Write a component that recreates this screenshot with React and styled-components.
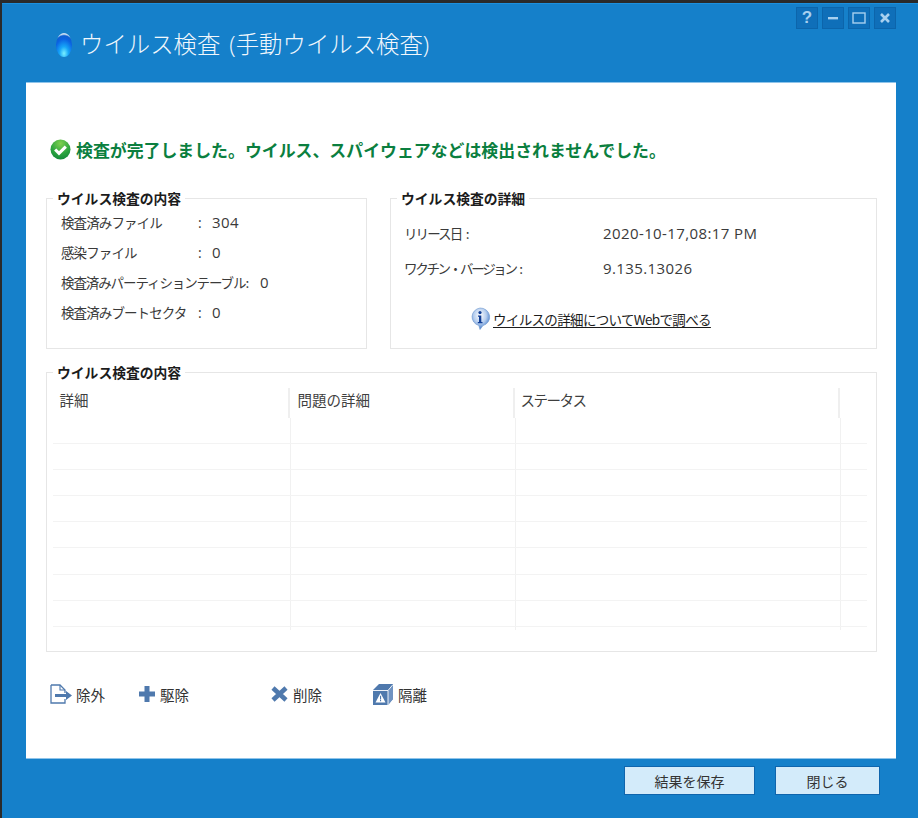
import styled, { createGlobalStyle } from "styled-components";

const GlobalStyle = createGlobalStyle`
  html, body {
    margin: 0;
    background: #2a2a2a;
  }
  * {
    box-sizing: border-box;
  }
`;

const jp = `"Noto Sans CJK JP", "Open Sans", sans-serif`;
const latin = `"Open Sans", "Noto Sans CJK JP", sans-serif`;

const rows = [0, 1, 2, 3, 4, 5, 6, 7];

const App = () => {
  return (
    <>
      <GlobalStyle />
      <Window>
        <Header>
          <TitleWrap>
            <svg width="18" height="26" viewBox="0 0 18 26">
              <defs>
                <radialGradient id="drop" cx="0.5" cy="0.85" r="0.8">
                  <stop offset="0" stopColor="#7af0ff" />
                  <stop offset="0.35" stopColor="#16a6f8" />
                  <stop offset="0.75" stopColor="#0a62e2" />
                  <stop offset="0.92" stopColor="#0d5fd2" />
                  <stop offset="1" stopColor="#c4dbf1" />
                </radialGradient>
              </defs>
              <ellipse cx="9" cy="13" rx="8" ry="12" fill="url(#drop)" />
            </svg>
            <Title>
              ウイルス検査<Gap />
              <span>(</span>手動ウイルス検査<span>)</span>
            </Title>
          </TitleWrap>
          <WinButtons>
            <WinButton>
              <b>?</b>
            </WinButton>
            <WinButton>
              <svg width="12" height="12" viewBox="0 0 12 12">
                <rect x="1" y="5" width="10" height="2.4" fill="#a8d0ef" />
              </svg>
            </WinButton>
            <WinButton>
              <svg width="14" height="12" viewBox="0 0 14 12">
                <rect x="1" y="1" width="12" height="10" fill="none" stroke="#a8d0ef" strokeWidth="1.4" />
              </svg>
            </WinButton>
            <WinButton>
              <svg width="12" height="12" viewBox="0 0 12 12">
                <path d="M2 2l8 8M10 2l-8 8" stroke="#a8d0ef" strokeWidth="2.6" />
              </svg>
            </WinButton>
          </WinButtons>
        </Header>

        <Panel>
          <Status>
            <svg width="21" height="21" viewBox="0 0 21 21">
              <defs>
                <radialGradient id="ok" cx="0.5" cy="0.2" r="0.9">
                  <stop offset="0" stopColor="#7fd04e" />
                  <stop offset="0.55" stopColor="#2ca53f" />
                  <stop offset="1" stopColor="#0c8238" />
                </radialGradient>
              </defs>
              <circle cx="10.5" cy="10.5" r="10" fill="url(#ok)" />
              <path d="M5.2 10.5l3.8 3.8 6.8-6.6" fill="none" stroke="#fff" strokeWidth="3.1" />
            </svg>
            <StatusText>検査が完了しました。ウイルス、スパイウェアなどは検出されませんでした。</StatusText>
          </Status>

          <TopGroups>
            <Group $h={150.5} $w={321}>
              <Legend>ウイルス検査の内容</Legend>
              <StatList>
                <StatRow>
                  <StatLabel $w={137}>検査済みファイル</StatLabel>
                  <Colon>:</Colon>
                  <Value>304</Value>
                </StatRow>
                <StatRow>
                  <StatLabel $w={137}>感染ファイル</StatLabel>
                  <Colon>:</Colon>
                  <Value>0</Value>
                </StatRow>
                <StatRow>
                  <StatLabel $tight>検査済みパーティションテーブル:</StatLabel>
                  <Value>0</Value>
                </StatRow>
                <StatRow>
                  <StatLabel $w={137}>検査済みブートセクタ</StatLabel>
                  <Colon>:</Colon>
                  <Value>0</Value>
                </StatRow>
              </StatList>
            </Group>

            <Group $h={150.5} $w={487}>
              <Legend>ウイルス検査の詳細</Legend>
              <DetailList>
                <DetailRow>
                  <DetailLabel $ls={-1.9}>{"リリース日    :"}</DetailLabel>
                  <Value>2020-10-17,08:17 PM</Value>
                </DetailRow>
                <DetailRow>
                  <DetailLabel $ls={-2.3}>{"ワクチン・バージョン     :"}</DetailLabel>
                  <Value>9.135.13026</Value>
                </DetailRow>
              </DetailList>
              <LinkRow>
                <svg width="22" height="23" viewBox="0 0 22 23">
                  <defs>
                    <radialGradient id="info" cx="0.45" cy="0.35" r="0.65">
                      <stop offset="0" stopColor="#ffffff" />
                      <stop offset="0.55" stopColor="#b5cdee" />
                      <stop offset="1" stopColor="#3f78c8" />
                    </radialGradient>
                  </defs>
                  <path d="M11 1a9.5 9 0 0 1 3 17.6L11 22.5l-1.2-4A9.5 9 0 0 1 11 1z" fill="url(#info)" stroke="#6d97cf" strokeWidth="0.6" />
                  <circle cx="11" cy="5.6" r="1.6" fill="#123f96" />
                  <path d="M9 8.5h3.3v6.4h1.2v1.3H8.8v-1.3H10V9.8H9z" fill="#123f96" />
                </svg>
                <WebLink>ウイルスの詳細についてWebで調べる</WebLink>
              </LinkRow>
            </Group>
          </TopGroups>

          <Group $h={280.5} $w={831}>
            <Legend>ウイルス検査の内容</Legend>
            <Table>
              <HeadRow>
                <HeadCell $pl={7}>詳細</HeadCell>
                <HeadCell $pl={8}>問題の詳細</HeadCell>
                <HeadCell $pl={6} $ls={-1.5}>ステータス</HeadCell>
                <HeadCell />
              </HeadRow>
              {rows.map((r) => (
                <BodyRow key={r}>
                  <BodyCell />
                  <BodyCell />
                  <BodyCell />
                  <BodyCell $last />
                </BodyRow>
              ))}
              <TailRow>
                <BodyCell />
                <BodyCell />
                <BodyCell />
                <BodyCell $last />
              </TailRow>
            </Table>
          </Group>

          <Toolbar>
            <ToolItem $w={88}>
              <svg width="22" height="20" viewBox="0 0 22 20">
                <path d="M1 1h9l5 5v3M15 15v4H1V1" fill="none" stroke="#4f79ad" strokeWidth="1.3" />
                <path d="M10 1v5h5" fill="none" stroke="#4f79ad" strokeWidth="1.1" />
                <path d="M5 10h11V7l6 4.5-6 4.5v-3H5z" fill="#4f79ad" />
              </svg>
              <ToolText>除外</ToolText>
            </ToolItem>
            <ToolItem $w={132}>
              <svg width="18" height="18" viewBox="0 0 18 18">
                <path d="M6.5 1h5v5.5H17v5h-5.5V17h-5v-5.5H1v-5h5.5z" fill="#4f79ad" />
              </svg>
              <ToolText>駆除</ToolText>
            </ToolItem>
            <ToolItem $w={102}>
              <svg width="19" height="18" viewBox="0 0 19 18">
                <path d="M3 3l13 12M16 3L3 15" stroke="#4f79ad" strokeWidth="4.6" />
              </svg>
              <ToolText>削除</ToolText>
            </ToolItem>
            <ToolItem $w={100}>
              <svg width="22" height="23" viewBox="0 0 22 23">
                <path d="M1 7l6-6h14v15l-5 6H1z" fill="#4f79ad" />
                <path d="M16 7.5L21 1.5V16l-5 6z" fill="#6f93c2" />
                <path d="M1 7.5h15V22M16 7.5L21 1.5" fill="none" stroke="#fff" strokeWidth="0.9" />
                <path d="M8.5 10l5 9.5h-10z" fill="#fff" />
                <path d="M8 12.8h1.1v3.6H8zM8 17h1.1v1.2H8z" fill="#4f79ad" />
              </svg>
              <ToolText>隔離</ToolText>
            </ToolItem>
          </Toolbar>
        </Panel>

        <Footer>
          <FootButton $w={131}>結果を保存</FootButton>
          <FootButton $w={105}>閉じる</FootButton>
        </Footer>
      </Window>
    </>
  );
};

export default App;

const Window = styled.div`
  margin: 3px 0 0 2px;
  height: 815px;
  display: flex;
  flex-direction: column;
  background: #1580ca;
  border-top: 1px solid #1c90de;
  font-family: ${jp};
`;

const Header = styled.div`
  height: 78px;
  display: flex;
  justify-content: space-between;
  align-items: flex-start;
  padding: 3px 22px 0 53px;
`;

const TitleWrap = styled.div`
  display: flex;
  align-items: center;
  gap: 7px;
  margin-top: 20px;
  svg {
    margin-top: 3px;
  }
`;

const Title = styled.h1`
  margin: 0;
  font-size: 23.4px;
  line-height: 32px;
  font-weight: 300;
  color: #f1f7fc;
  white-space: nowrap;
  span {
    font-family: ${latin};
  }
`;

const Gap = styled.i`
  display: inline-block;
  width: 9px;
`;

const WinButtons = styled.div`
  display: flex;
  gap: 4px;
`;

const WinButton = styled.div`
  width: 22px;
  height: 22px;
  display: flex;
  align-items: center;
  justify-content: center;
  background: #0f6fb9;
  border: 1px solid #0c65ab;
  b {
    font-family: "Liberation Sans", sans-serif;
    font-size: 17px;
    color: #a8d0ef;
  }
`;

const Panel = styled.div`
  width: 870px;
  height: 677px;
  margin-left: 24px;
  padding: 0 18px 0 20px;
  background: #fff;
  border-top: 1px solid #8fc4ea;
  border-bottom: 1px solid #8fc4ea;
  display: flex;
  flex-direction: column;
`;

const Status = styled.div`
  display: flex;
  align-items: center;
  gap: 5px;
  height: 26px;
  margin: 53px 0 36px 4px;
`;

const StatusText = styled.div`
  font-size: 16.9px;
  font-weight: 700;
  color: #0b7f3f;
  white-space: nowrap;
`;

const TopGroups = styled.div`
  display: flex;
  gap: 23px;
  margin-bottom: 23px;
`;

const Group = styled.div`
  position: relative;
  width: ${(p) => p.$w}px;
  height: ${(p) => p.$h}px;
  border: 1.5px solid #e6e6e6;
`;

const Legend = styled.div`
  position: absolute;
  top: -11px;
  left: 6px;
  padding: 0 4px;
  background: #fff;
  font-size: 13.8px;
  line-height: 20px;
  font-weight: 700;
  color: #1c1c1c;
  white-space: nowrap;
`;

const StatList = styled.div`
  display: flex;
  flex-direction: column;
  gap: 8px;
  padding: 12px 0 0 14px;
`;

const StatRow = styled.div`
  display: flex;
  align-items: center;
  height: 22px;
  color: #3a3a3a;
`;

const StatLabel = styled.span`
  width: ${(p) => (p.$w ? `${p.$w}px` : "auto")};
  font-size: 13.5px;
  letter-spacing: ${(p) => (p.$tight ? "-1.1px" : "-0.9px")};
  white-space: nowrap;
  margin-right: ${(p) => (p.$tight ? "12px" : "0")};
`;

const Colon = styled.span`
  width: 14px;
  font-family: ${latin};
  font-size: 14px;
`;

const Value = styled.span`
  font-family: ${latin};
  font-size: 15px;
  letter-spacing: 0.4px;
  color: #3a3a3a;
  white-space: nowrap;
`;

const DetailList = styled.div`
  display: flex;
  flex-direction: column;
  gap: 13px;
  padding: 23px 0 0 13px;
`;

const DetailRow = styled.div`
  display: flex;
  align-items: center;
  height: 22px;
`;

const DetailLabel = styled.span`
  width: 199px;
  font-size: 13.5px;
  letter-spacing: ${(p) => p.$ls}px;
  color: #3a3a3a;
  white-space: pre;
`;

const LinkRow = styled.div`
  display: flex;
  align-items: center;
  margin: 28px 0 0 78px;
  gap: 2px;
`;

const WebLink = styled.a`
  font-size: 13.5px;
  letter-spacing: -0.66px;
  line-height: 18px;
  color: #1c1c1c;
  text-decoration: underline;
  text-underline-offset: 2px;
  white-space: nowrap;
`;

const Table = styled.div`
  margin: 15px 0 0 5.5px;
  width: 814px;
  display: flex;
  flex-direction: column;
`;

const headColumns = "237px 225px 325px 27px";
const bodyColumns = "238px 225px 325px 26px";

const HeadRow = styled.div`
  display: grid;
  grid-template-columns: ${headColumns};
  height: 30px;
`;

const HeadCell = styled.div`
  padding: 0 0 7px ${(p) => p.$pl || 0}px;
  display: flex;
  align-items: center;
  font-size: 14.5px;
  color: #3f3f3f;
  border-right: 2px solid #efefef;
  letter-spacing: ${(p) => p.$ls || 0}px;
  &:last-child {
    border-right: none;
  }
`;

const BodyRow = styled.div`
  display: grid;
  grid-template-columns: ${bodyColumns};
  height: 26.2px;
  border-bottom: 1.5px solid #f3f3f3;
`;

const TailRow = styled.div`
  display: grid;
  grid-template-columns: ${bodyColumns};
  height: 3px;
`;

const BodyCell = styled.div`
  border-right: ${(p) => (p.$last ? "none" : "1.5px solid #f1f1f1")};
`;

const Toolbar = styled.div`
  display: flex;
  align-items: center;
  height: 26px;
  margin: 29px 0 0 4px;
`;

const ToolItem = styled.div`
  width: ${(p) => p.$w}px;
  display: flex;
  align-items: center;
  gap: 4px;
`;

const ToolText = styled.span`
  font-size: 14.5px;
  color: #333;
  white-space: nowrap;
`;

const Footer = styled.div`
  display: flex;
  justify-content: flex-end;
  gap: 20px;
  padding: 7px 38px 0 0;
`;

const FootButton = styled.button`
  width: ${(p) => p.$w}px;
  height: 29px;
  padding: 0;
  font-family: ${jp};
  font-size: 14px;
  color: #333;
  background: #d3ebfa;
  border: 1.5px solid #0f65ad;
`;
